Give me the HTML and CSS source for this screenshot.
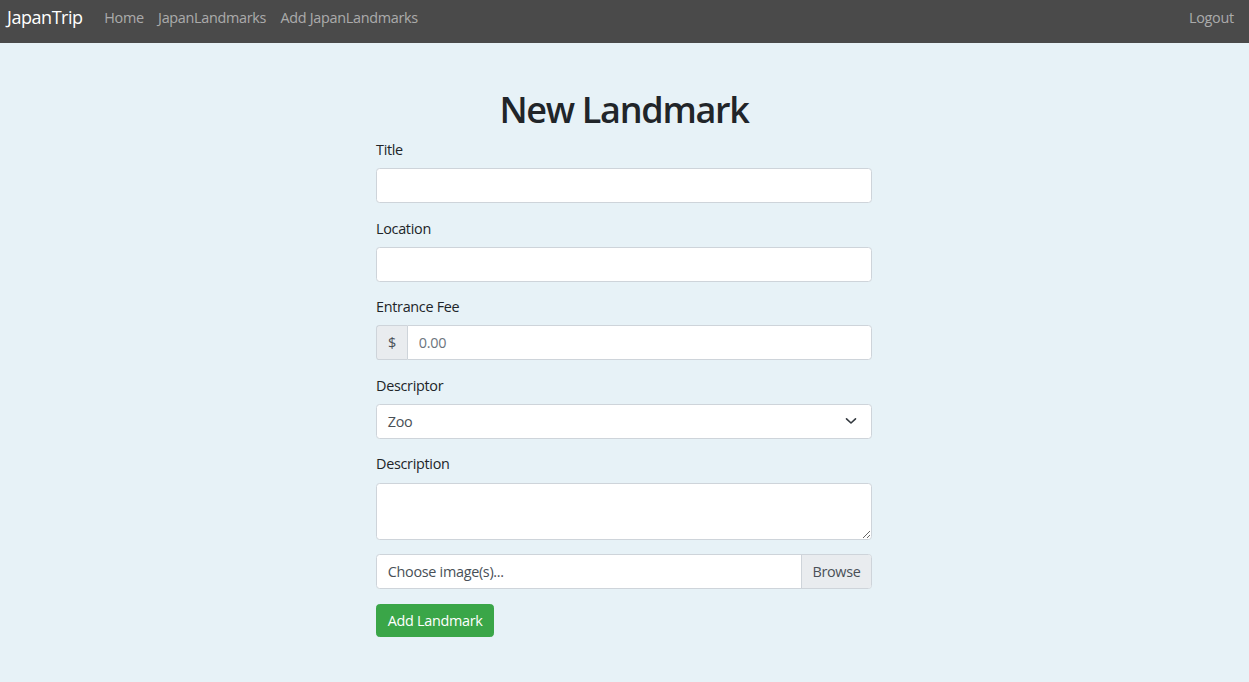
FILE: index.html
```html
<!DOCTYPE html>
<html lang="en">
<head>
<meta charset="utf-8">
<title>JapanTrip</title>
<link rel="stylesheet" href="styles.css">
</head>
<body>
<nav class="navbar">
  <a class="brand" href="#">JapanTrip</a>
  <ul class="nav">
    <li><a href="#">Home</a></li>
    <li><a href="#">JapanLandmarks</a></li>
    <li><a href="#">Add JapanLandmarks</a></li>
  </ul>
  <ul class="nav nav-right">
    <li><a href="#">Logout</a></li>
  </ul>
</nav>
<main class="page">
  <div class="form-col">
    <h1 class="title">New Landmark</h1>
    <form class="form">
      <div class="group">
        <label class="label">Title</label>
        <input class="control" type="text">
      </div>
      <div class="group">
        <label class="label">Location</label>
        <input class="control" type="text">
      </div>
      <div class="group">
        <label class="label">Entrance Fee</label>
        <div class="input-group">
          <span class="addon">$</span>
          <input class="control grouped" type="text" placeholder="0.00">
        </div>
      </div>
      <div class="group">
        <label class="label">Descriptor</label>
        <div class="select">
          <span>Zoo</span>
          <svg width="12" height="8" viewBox="0 0 12 8"><path d="M1.5 1.8 L6 6 L10.5 1.8" fill="none" stroke="#343a40" stroke-width="1.6" stroke-linecap="round" stroke-linejoin="round"/></svg>
        </div>
      </div>
      <div class="group">
        <label class="label">Description</label>
        <textarea class="control textarea"></textarea>
      </div>
      <div class="group">
        <div class="file">
          <span class="file-label">Choose image(s)...</span>
          <span class="file-btn">Browse</span>
        </div>
      </div>
      <button class="btn" type="button">Add Landmark</button>
    </form>
  </div>
</main>
</body>
</html>
```
FILE: styles.css
```css
* { box-sizing: border-box; }
html, body { margin: 0; padding: 0; }
body {
  background: #e7f2f7;
  font-family: "Open Sans", "Noto Sans", sans-serif;
  font-size: 14.4px;
  line-height: 21.6px;
  letter-spacing: -0.3px;
  color: #212529;
  height: 682px;
  overflow: hidden;
}
.navbar {
  height: 43px;
  background: #4a4a4a;
  display: flex;
  align-items: flex-start;
  padding: 4px 8px 0 7px;
}
.brand {
  color: #fff;
  text-decoration: none;
  font-size: 18px;
  line-height: 27px;
  letter-spacing: -0.45px;
  margin-right: 14.4px;
}
.nav {
  list-style: none;
  margin: 0;
  padding: 0;
  display: flex;
  padding-top: 3px;
}
.nav a {
  display: block;
  padding: 0 7.2px;
  color: rgba(255,255,255,0.55);
  text-decoration: none;
  line-height: 21.6px;
}
.nav-right { margin-left: auto; }
.page {
  display: flex;
  justify-content: center;
  padding-right: 1px;
}
.form-col {
  width: 496px;
  padding-top: 45px;
}
.title {
  font-size: 36px;
  font-weight: 600;
  line-height: 43px;
  letter-spacing: -1.3px;
  margin: 0 0 8px;
  text-align: center;
}
.group { margin-bottom: 14.4px; }
.label {
  display: block;
  line-height: 22px;
  margin-bottom: 7.2px;
}
.control {
  display: block;
  width: 100%;
  height: 35px;
  border: 1px solid #ced4da;
  border-radius: 3.6px;
  background: #fff;
  font: inherit;
  letter-spacing: -0.3px;
  color: #495057;
  padding: 0 10.8px;
  outline: none;
}
.control::placeholder { color: #6c757d; }
.input-group { display: flex; }
.addon {
  width: 31px;
  height: 35px;
  display: flex;
  align-items: center;
  justify-content: center;
  background: #e9ecef;
  border: 1px solid #ced4da;
  border-right: none;
  border-radius: 3.6px 0 0 3.6px;
  color: #495057;
}
.grouped {
  flex: 1;
  border-radius: 0 3.6px 3.6px 0;
}
.select {
  height: 35px;
  background: #fff;
  border: 1px solid #ced4da;
  border-radius: 3.6px;
  display: flex;
  align-items: center;
  justify-content: space-between;
  padding: 0 14px 0 10.8px;
  color: #495057;
}
.textarea {
  height: 57px;
  resize: vertical;
  padding-top: 5.4px;
}
.file {
  display: flex;
  height: 35.6px;
  border: 1px solid #ced4da;
  border-radius: 3.6px;
  background: #fff;
  overflow: hidden;
}
.file-label {
  flex: 1;
  display: flex;
  align-items: center;
  padding: 0 10.8px;
  color: #495057;
}
.file-btn {
  width: 70px;
  display: flex;
  align-items: center;
  justify-content: center;
  background: #e9ecef;
  border-left: 1px solid #ced4da;
  color: #495057;
}
.btn {
  background: #3aa648;
  border: 1px solid #3aa648;
  border-radius: 3.6px;
  color: #fff;
  font: inherit;
  letter-spacing: -0.3px;
  height: 33.5px;
  padding: 0 10.8px;
}
```
